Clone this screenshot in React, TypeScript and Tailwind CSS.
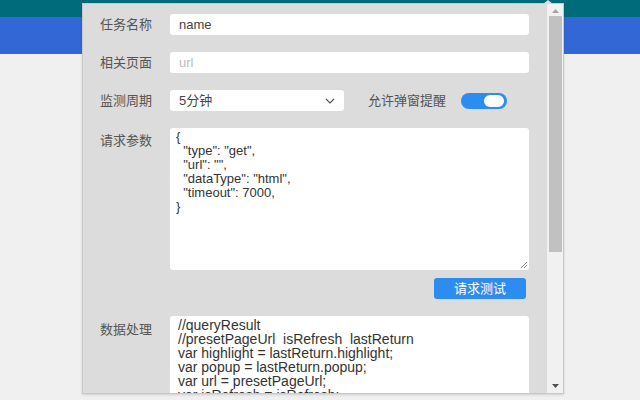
import React from "react";

const font = { fontFamily: '"Liberation Sans", "Noto Sans CJK SC", sans-serif' };

export default function App() {
  return (
    <div className="relative w-[640px] h-[400px] bg-[#f0f0f0] overflow-hidden" style={font}>
      <div className="h-[17px] bg-[#006b7a]" />
      <div className="h-[37px] bg-[#3367d6]" />

      {/* popup */}
      <div className="absolute left-[82px] top-[3px] w-[482px] h-[391px] bg-[#dcdcdc] border border-[#c8c8c8] shadow flex overflow-hidden">
        <div className="flex-1 pl-[17px] pr-[18px] pt-[10px] text-[13px] text-[#555]">
          <div className="flex items-center h-[21px]">
            <span className="w-[70px]">任务名称</span>
            <div className="flex-1 h-[21px] bg-white rounded-[3px] px-[9px] flex items-center text-[#444]">name</div>
          </div>
          <div className="flex items-center h-[21px] mt-[17px]">
            <span className="w-[70px]">相关页面</span>
            <div className="flex-1 h-[21px] bg-white rounded-[3px] px-[9px] flex items-center text-[#bbb]">url</div>
          </div>
          <div className="flex items-center h-[21px] mt-[17px]">
            <span className="w-[70px]">监测周期</span>
            <div className="w-[174px] h-[21px] bg-white rounded-[3px] px-[9px] flex items-center justify-between text-[#444]">
              <span>5分钟</span>
              <svg width="10" height="6" viewBox="0 0 10 6"><path d="M1 1l4 4 4-4" fill="none" stroke="#555" strokeWidth="1.2" /></svg>
            </div>
            <span className="ml-[24px]">允许弹窗提醒</span>
            <div className="ml-[15px] w-[46px] h-[16px] rounded-full bg-[#2d8cf0] relative">
              <div className="absolute right-[3px] top-[2px] w-[20px] h-[12px] rounded-full bg-white" />
            </div>
          </div>
          <div className="flex mt-[17px]">
            <span className="w-[70px] pt-[3px]">请求参数</span>
            <div className="relative flex-1 h-[142px] bg-white rounded-[3px] px-[6px] pt-[2px] text-[13px] leading-[14px] text-[#333] whitespace-pre">
{`{
  "type": "get",
  "url": "",
  "dataType": "html",
  "timeout": 7000,
}`}
              <svg className="absolute right-[1px] bottom-[1px]" width="8" height="8" viewBox="0 0 8 8"><path d="M7 1L1 7M7 4L4 7" stroke="#888" strokeWidth="1" /></svg>
            </div>
          </div>
          <div className="flex justify-end mt-[8px] pr-[3px]">
            <div className="w-[92px] h-[21px] bg-[#2d8cf0] rounded-[3px] text-white text-[13px] flex items-center justify-center">请求测试</div>
          </div>
          <div className="flex mt-[17px]">
            <span className="w-[70px] pt-[4px]">数据处理</span>
            <div className="flex-1 h-[100px] bg-white rounded-[3px] px-[8px] pt-[2px] text-[14px] leading-[14px] text-[#333] whitespace-pre">
{`//queryResult
//presetPageUrl  isRefresh  lastReturn
var highlight = lastReturn.highlight;
var popup = lastReturn.popup;
var url = presetPageUrl;
var isRefresh = isRefresh;`}
            </div>
          </div>
        </div>
        {/* scrollbar */}
        <div className="w-[16px] bg-[#f1f1f1] flex flex-col items-center">
          <svg className="mt-[5px]" width="7" height="4" viewBox="0 0 7 4"><path d="M0 4L3.5 0 7 4z" fill="#a3a3a3" /></svg>
          <div className="mt-[3px] w-[13px] h-[236px] bg-[#c1c1c1]" />
          <div className="flex-1" />
          <svg className="mb-[5px]" width="7" height="4" viewBox="0 0 7 4"><path d="M0 0L7 0 3.5 4z" fill="#505050" /></svg>
        </div>
      </div>
      <div className="absolute left-[543px] top-0 w-0 h-0 border-l-[5px] border-r-[5px] border-b-[4px] border-l-transparent border-r-transparent border-b-[#dcdcdc]" />
    </div>
  );
}
